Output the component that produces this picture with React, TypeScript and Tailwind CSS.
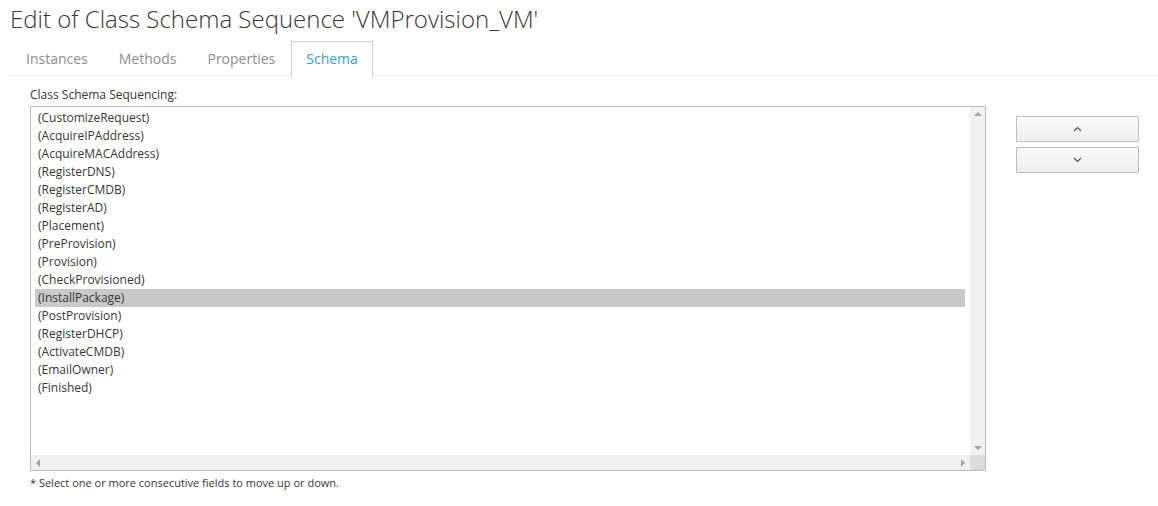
import { useState } from 'react';

const items = [
  'CustomizeRequest',
  'AcquireIPAddress',
  'AcquireMACAddress',
  'RegisterDNS',
  'RegisterCMDB',
  'RegisterAD',
  'Placement',
  'PreProvision',
  'Provision',
  'CheckProvisioned',
  'InstallPackage',
  'PostProvision',
  'RegisterDHCP',
  'ActivateCMDB',
  'EmailOwner',
  'Finished',
];

const tabs = ['Instances', 'Methods', 'Properties', 'Schema'];

function Chevron({ up }: { up?: boolean }) {
  return (
    <svg width="9" height="6" viewBox="0 0 9 6" className="text-[#4d5258]">
      <path
        d={up ? 'M1 5 L4.5 1.5 L8 5' : 'M1 1 L4.5 4.5 L8 1'}
        fill="none"
        stroke="currentColor"
        strokeWidth="1.2"
      />
    </svg>
  );
}

export default function App() {
  const [selected, setSelected] = useState(10);

  return (
    <div className="w-[1158px] h-[506px] bg-white text-[#363636] font-['Open_Sans',sans-serif] overflow-hidden">
      {/* Title */}
      <h1 className="pl-[10px] pt-[3px] h-[41px] text-[24px] font-light leading-[32px] text-[#363636]">
        Edit of Class Schema Sequence 'VMProvision_VM'
      </h1>

      {/* Tabs */}
      <div className="ml-[10px] flex h-[35px] border-b border-[#ededed] pl-[1px]">
        {tabs.map((t, i) => {
          const active = t === 'Schema';
          return (
            <div
              key={t}
              className={`h-[35px] px-[14px] pt-[7px] text-[14px] leading-[20px] ${i > 0 ? 'ml-px' : ''} ${
                active
                  ? 'border border-b-0 border-[#d1d1d1] bg-white text-[#2ba0d8] -mb-px h-[36px]'
                  : 'border border-transparent text-[#8b8d8f]'
              }`}
            >
              {t}
            </div>
          );
        })}
      </div>

      {/* Body */}
      <div className="flex pl-[30px] pt-[10px]">
        <div className="w-[956px]">
          <div className="h-[20px] text-[12px] leading-[18px]">Class Schema Sequencing:</div>
          <div className="flex h-[365px] flex-col border border-[#bbbbbb]">
            <div className="flex flex-1 min-h-0">
              <div className="flex-1 pl-[4px] pr-[5px] pt-[2px] text-[12px] leading-[18px]">
                {items.map((it, i) => (
                  <div
                    key={it}
                    onClick={() => setSelected(i)}
                    className={`h-[18px] pl-[3px] cursor-default ${i === selected ? 'bg-[#c8c8c8]' : ''}`}
                  >
                    ({it})
                  </div>
                ))}
              </div>
              {/* vertical scrollbar */}
              <div className="flex w-[15px] flex-col justify-between bg-[#f0f0f0] py-[5px]">
                <div className="mx-auto h-0 w-0 border-x-[4px] border-b-[4px] border-x-transparent border-b-[#a3a3a3]" />
                <div className="mx-auto h-0 w-0 border-x-[4px] border-t-[4px] border-x-transparent border-t-[#a3a3a3]" />
              </div>
            </div>
            {/* horizontal scrollbar */}
            <div className="flex h-[15px]">
              <div className="flex flex-1 items-center justify-between bg-[#f0f0f0] px-[5px]">
                <div className="h-0 w-0 border-y-[4px] border-r-[4px] border-y-transparent border-r-[#a3a3a3]" />
                <div className="h-0 w-0 border-y-[4px] border-l-[4px] border-y-transparent border-l-[#a3a3a3]" />
              </div>
              <div className="w-[15px] bg-[#dcdcdc]" />
            </div>
          </div>
          <div className="pt-[4px] text-[11px] leading-[16px]">
            * Select one or more consecutive fields to move up or down.
          </div>
        </div>

        {/* Move buttons */}
        <div className="ml-[30px] flex flex-col gap-[5px] pt-[30px]">
          <button className="flex h-[26px] w-[123px] items-center justify-center rounded-[1px] border border-[#bbbbbb] bg-gradient-to-b from-[#fafafa] to-[#ededed]">
            <Chevron up />
          </button>
          <button className="flex h-[26px] w-[123px] items-center justify-center rounded-[1px] border border-[#bbbbbb] bg-gradient-to-b from-[#fafafa] to-[#ededed]">
            <Chevron />
          </button>
        </div>
      </div>
    </div>
  );
}
